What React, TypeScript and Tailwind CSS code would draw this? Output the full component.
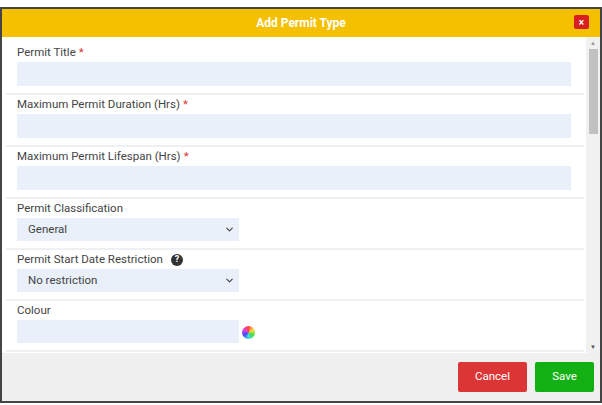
import { ChevronDown } from 'lucide-react';

function Row({ label, required, help, children, last }: { label: string; required?: boolean; help?: boolean; children: React.ReactNode; last?: boolean }) {
  return (
    <div className={last ? 'pt-[2px] pb-[5px] pl-[11px]' : 'pt-[2px] pb-[7px] pl-[11px] border-b-2 border-[#eef0f3]'}>
      <div className="flex items-center h-[15px] mb-[2px] text-[11.5px] text-[#444]">
        {label}
        {required && <span className="text-[#e03030] ml-[3px]">*</span>}
        {help && (
          <span className="ml-[8px] w-[12px] h-[12px] rounded-full bg-[#333] text-white text-[9px] font-bold flex items-center justify-center">?</span>
        )}
      </div>
      {children}
    </div>
  );
}

function Select({ value }: { value: string }) {
  return (
    <div className="w-[222px] h-[23px] bg-[#e9f0f9] flex items-center justify-between pl-[11px] pr-[4px] text-[11.5px] text-[#444]">
      {value}
      <ChevronDown size={11} strokeWidth={2.5} className="text-[#444]" />
    </div>
  );
}

export default function App() {
  return (
    <div className="w-[602px] h-[405px] bg-white pt-[7px]" style={{ fontFamily: 'Roboto, "Liberation Sans", sans-serif' }}>
      <div className="h-[396px] border-2 border-[#444] flex flex-col">
        <div className="h-[28px] bg-[#f5c000] flex items-center justify-center relative">
          <span className="text-white text-[12px] font-bold">Add Permit Type</span>
          <div className="absolute right-[11px] top-[6px] w-[15px] h-[14px] bg-[#d92020] rounded-[2px] text-white text-[10px] font-bold flex items-center justify-center">×</div>
        </div>
        <div className="flex flex-1 min-h-0 bg-white">
          <div className="flex-1 pl-[4px] pr-[2px] pt-[6px] overflow-hidden">
            <Row label="Permit Title" required>
              <div className="w-[554px] h-[24px] bg-[#e9f0f9]" />
            </Row>
            <Row label="Maximum Permit Duration (Hrs)" required>
              <div className="w-[554px] h-[24px] bg-[#e9f0f9]" />
            </Row>
            <Row label="Maximum Permit Lifespan (Hrs)" required>
              <div className="w-[554px] h-[24px] bg-[#e9f0f9]" />
            </Row>
            <Row label="Permit Classification">
              <Select value="General" />
            </Row>
            <Row label="Permit Start Date Restriction" help>
              <Select value="No restriction" />
            </Row>
            <Row label="Colour">
              <div className="flex items-end gap-[3px]">
                <div className="w-[222px] h-[23px] bg-[#e9f0f9]" />
                <div className="w-[13px] h-[13px] rounded-full mb-[4px]" style={{ background: 'conic-gradient(#f44, #fd4, #4d4, #4dd, #44f, #d4d, #f44)' }} />
              </div>
            </Row>
          </div>
          <div className="w-[14px] bg-[#f1f1f1] flex flex-col items-center">
            <div className="h-[12px] text-[6px] text-[#999] leading-[12px]">▲</div>
            <div className="w-[9px] h-[85px] bg-[#c1c1c1]" />
            <div className="flex-1" />
            <div className="h-[12px] text-[6px] text-[#555] leading-[12px]">▼</div>
          </div>
        </div>
        <div className="h-[48px] bg-[#f0f0f0] flex items-center justify-end gap-[8px] pr-[6px]">
          <div className="w-[69px] h-[30px] bg-[#dc3535] rounded-[2px] text-white text-[11.5px] flex items-center justify-center">Cancel</div>
          <div className="w-[59px] h-[30px] bg-[#12b012] rounded-[2px] text-white text-[11.5px] flex items-center justify-center">Save</div>
        </div>
      </div>
    </div>
  );
}
